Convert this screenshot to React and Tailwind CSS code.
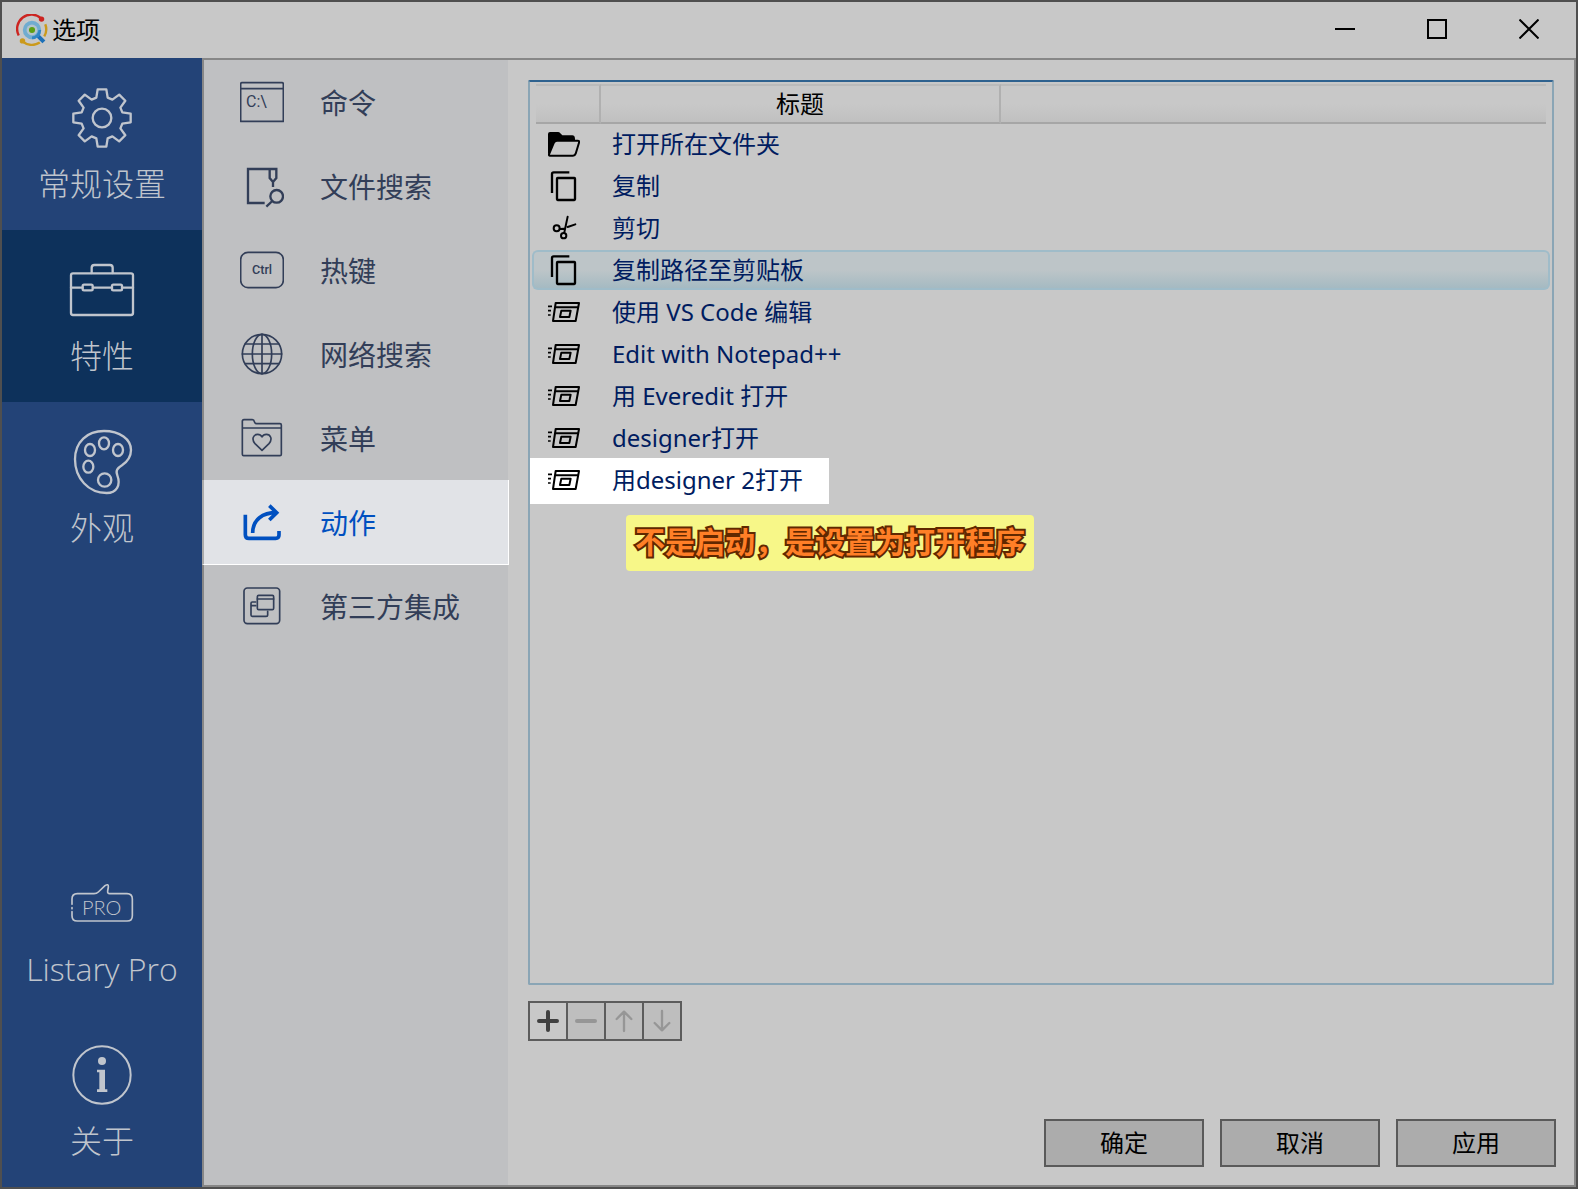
import React from "react";

const line = { fill: "none", stroke: "currentColor", strokeLinecap: "round", strokeLinejoin: "round" };

/* ---------- main sidebar icons ---------- */

function gearPath() {
  const tooth = [[-17, -61], [-13, -86], [13, -86], [17, -61]];
  const pts = [];
  for (let i = 0; i < 8; i++) {
    const a = (i * Math.PI) / 4;
    for (const [x, y] of tooth) {
      pts.push(`${(x * Math.cos(a) - y * Math.sin(a)).toFixed(1)} ${(x * Math.sin(a) + y * Math.cos(a)).toFixed(1)}`);
    }
  }
  return `M${pts.join("L")}Z`;
}

const GearIcon = () => (
  <svg viewBox="-96 -96 192 192" className="size-16" {...line} strokeWidth="7" aria-hidden="true">
    <path d={gearPath()} />
    <circle r="28" />
  </svg>
);

const BriefcaseIcon = () => (
  <svg viewBox="210 114 192 192" className="size-16 overflow-visible" {...line} strokeWidth="7" aria-hidden="true">
    <rect x="213" y="160" width="186" height="125" rx="6" />
    <path d="M275 159V143q0-8 8-8H330q8 0 8 8V159M213 203H247M279 203H335M367 203H399" />
    <rect x="248" y="194" width="30" height="17" rx="4" />
    <rect x="336" y="194" width="30" height="17" rx="4" />
  </svg>
);

const PaletteIcon = () => (
  <svg viewBox="210 630 192 192" className="size-16 overflow-visible" {...line} strokeWidth="7" aria-hidden="true">
    <path d="M312 633C360 633 393 658 393 690C393 712 382 725 366 736C352 745 346 751 352 766C363 795 350 819 320 819C265 819 225 775 225 718C225 665 262 633 312 633Z" />
    <ellipse cx="270" cy="690" rx="15" ry="18" />
    <ellipse cx="312" cy="670" rx="15" ry="18" />
    <ellipse cx="354" cy="690" rx="15" ry="18" />
    <ellipse cx="265" cy="740" rx="15" ry="18" />
    <circle cx="314" cy="780" r="20" />
  </svg>
);

const ProIcon = () => (
  <svg viewBox="210 33 192 192" className="size-16 overflow-visible" {...line} strokeWidth="5" aria-hidden="true">
    <path d="M216 133V117q0-16 16-16H282Q290 101 295 96L315 77Q326 70 325 81L323 93Q322 101 329 101H381q16 0 16 16V167q0 16-16 16H232q-16 0-16-16V155M216 143V146" />
    <text x="305" y="164" textAnchor="middle" fontSize="60" fill="currentColor" stroke="none" className="font-['Lato'] font-light">PRO</text>
  </svg>
);

const InfoIcon = () => (
  <svg viewBox="210 549 192 192" className="size-16" aria-hidden="true">
    <circle cx="306" cy="645" r="86" {...line} strokeWidth="6" />
    <circle cx="306" cy="603" r="12" fill="currentColor" />
    <path d="M291 629H315V688H322V696H291V688H298V637H291Z" fill="currentColor" />
  </svg>
);

/* ---------- feature list icons ---------- */

const CommandIcon = () => (
  <svg viewBox="120 90 132 132" className="size-11" {...line} strokeWidth="5" aria-hidden="true">
    <path d="M122 214V102q0-4 4-4H246q4 0 4 4V214ZM122 116H250" />
    <text x="138" y="171" fontSize="48" fill="currentColor" stroke="none" className="font-['Roboto']">C:\</text>
  </svg>
);

const FileSearchIcon = () => (
  <svg viewBox="120 342 132 132" className="size-11" {...line} strokeLinecap="butt" strokeLinejoin="miter" strokeWidth="7" aria-hidden="true">
    <path d="M194 459H144V357H229V384L219 396L209 384V357M219 394V411" />
    <circle cx="230" cy="439" r="19" />
    <path d="M217 453L199 470" />
  </svg>
);

const CtrlIcon = () => (
  <svg viewBox="120 594 132 132" className="size-11" {...line} strokeWidth="5" aria-hidden="true">
    <rect x="122" y="607" width="128" height="106" rx="22" />
    <text x="186" y="673" textAnchor="middle" fontSize="38" fill="currentColor" stroke="none" className="font-['Roboto'] font-medium">Ctrl</text>
  </svg>
);

const GlobeIcon = () => (
  <svg viewBox="120 96 132 132" className="size-11" {...line} strokeWidth="5" aria-hidden="true">
    <circle cx="186" cy="162" r="59" />
    <ellipse cx="186" cy="162" rx="29" ry="59" />
    <path d="M127 162H245M186 103V221M136 132H236M136 191H236" />
  </svg>
);

const MenuFolderIcon = () => (
  <svg viewBox="120 348 132 132" className="size-11" {...line} strokeWidth="5" aria-hidden="true">
    <path d="M127 364q0-5 5-5H157q5 0 6 6q1 6 7 6H240q4 0 4 4V463q0 4-4 4H131q-4 0-4-4ZM127 384H244" />
    <path d="M186 451L165 431C153 417 161 403 173 403C180 403 184 407 186 411C188 407 192 403 199 403C211 403 219 417 207 431Z" />
  </svg>
);

const ShareIcon = () => (
  <svg viewBox="120 600 132 132" className="size-11" {...line} strokeLinecap="butt" strokeLinejoin="miter" strokeWidth="11" aria-hidden="true">
    <path d="M136 644V704q0 11 11 11H227q10 0 10-10V693" />
    <path d="M158 699C158 658 188 638 230 638M208 617L230 638L208 660" />
  </svg>
);

const IntegrationIcon = () => (
  <svg viewBox="120 852 132 132" className="size-11" {...line} strokeWidth="5" aria-hidden="true">
    <rect x="132" y="864" width="107" height="107" rx="10" />
    <rect x="172" y="886" width="49" height="43" rx="4" />
    <path d="M172 897H221M167 906H157q-4 0-4 4V945q0 4 4 4H198q5 0 5-5V934M153 917H167" />
  </svg>
);

/* ---------- action icons ---------- */

const FolderOpenIcon = () => (
  <svg viewBox="84 174 96 96" className="size-8" aria-hidden="true">
    <path d="M84 253V192q0-6 6-6H114q4 0 7 4l6 6H157q7 0 8 10V212L100 240Z" fill="#000" />
    <path d="M111 212H173q6 0 4 6L167 251q-2 6-8 6H90q-4 0-3-4L101 219q3-7 10-7Z" fill="#c8c8c8" stroke="#000" strokeWidth="6" strokeLinejoin="round" />
  </svg>
);

const CopyIcon = () => (
  <svg viewBox="84 300 96 96" className="size-8" {...line} strokeLinecap="butt" strokeWidth="7" aria-hidden="true">
    <path d="M96 369V312q0-5 5-5H148" />
    <rect x="111" y="324" width="54" height="66" rx="2" />
  </svg>
);

const ScissorsIcon = () => (
  <svg viewBox="84 426 96 96" className="size-8" {...line} strokeWidth="6" aria-hidden="true">
    <circle cx="110" cy="475" r="9" />
    <circle cx="131" cy="497" r="8" />
    <path d="M143 440L133 487M120 477L133 476M143 471L166 463" />
  </svg>
);

const RunIcon = () => (
  <svg viewBox="84 18 96 96" className="size-8" {...line} strokeLinecap="butt" strokeWidth="6" aria-hidden="true">
    <path d="M107 39H177L167 93H99ZM105 52H175" />
    <path d="M124 62H152L148 81H120Z" />
    <path d="M84 49H96M84 62H93M84 75H92" strokeWidth="5" />
  </svg>
);

const LogoIcon = () => (
  <svg viewBox="46 40 94 94" className="size-8" fill="none" aria-hidden="true">
    <path d="M54 103A42 42 0 0 1 120 53" stroke="#cc2420" strokeWidth="7" />
    <circle cx="121" cy="55" r="8" fill="#cc2420" />
    <path d="M132 70A42 42 0 0 1 129 106" stroke="#cb9a1c" strokeWidth="7" />
    <path d="M66 121A42 42 0 0 0 116 124" stroke="#cb9a1c" strokeWidth="7" />
    <circle cx="65" cy="119" r="8" fill="#cb9a1c" />
    <path d="M108 102L128 122" stroke="#1c70b8" strokeWidth="12" />
    <circle cx="93" cy="87" r="20" fill="#b5c4cc" stroke="#71acd0" strokeWidth="14" />
    <path d="M93 110A23 23 0 0 0 116 87" stroke="#2f86c4" strokeWidth="8" />
    <circle cx="93" cy="87" r="16" fill="#b5c4cc" />
    <circle cx="93" cy="87" r="9" fill="#5da013" />
  </svg>
);

/* ---------- data ---------- */

const sections = [
  { label: "常规设置", Icon: GearIcon },
  { label: "特性", Icon: BriefcaseIcon, active: true },
  { label: "外观", Icon: PaletteIcon },
];

const footerSections = [
  { label: "Listary Pro", Icon: ProIcon },
  { label: "关于", Icon: InfoIcon },
];

const features = [
  { label: "命令", Icon: CommandIcon },
  { label: "文件搜索", Icon: FileSearchIcon },
  { label: "热键", Icon: CtrlIcon },
  { label: "网络搜索", Icon: GlobeIcon },
  { label: "菜单", Icon: MenuFolderIcon },
  { label: "动作", Icon: ShareIcon, active: true },
  { label: "第三方集成", Icon: IntegrationIcon },
];

const actions = [
  { title: "打开所在文件夹", Icon: FolderOpenIcon },
  { title: "复制", Icon: CopyIcon },
  { title: "剪切", Icon: ScissorsIcon },
  { title: "复制路径至剪贴板", Icon: CopyIcon, selected: true },
  { title: "使用 VS Code 编辑", Icon: RunIcon },
  { title: "Edit with Notepad++", Icon: RunIcon },
  { title: "用 Everedit 打开", Icon: RunIcon },
  { title: "designer打开", Icon: RunIcon },
  { title: "用designer 2打开", Icon: RunIcon, spotlight: true },
];

const tools = [
  { label: "添加", d: "M9 36H63M36 9V63", width: 12 },
  { label: "删除", d: "M9 36H63", width: 12, disabled: true },
  { label: "上移", d: "M36 66V8M14 30L36 8L58 30", width: 7, disabled: true },
  { label: "下移", d: "M36 6V64M14 42L36 64L58 42", width: 7, disabled: true },
];

/* ---------- parts ---------- */

function SectionButton({ label, Icon, active }) {
  return (
    <button
      type="button"
      aria-current={active ? "page" : undefined}
      className={
        "flex h-[172px] w-full flex-col items-center gap-2.5 pt-7 text-[#c0c5cd] " + (active ? "bg-[#0d315b]" : "")
      }
    >
      <Icon />
      <span className="text-[32px] leading-[48px] font-light whitespace-nowrap">{label}</span>
    </button>
  );
}

function FeatureButton({ label, Icon, active }) {
  return (
    <button
      type="button"
      aria-current={active ? "page" : undefined}
      className={
        "flex items-center gap-9 pl-9 text-[28px] leading-10 " +
        (active
          ? "-mr-px -mb-px -ml-0.5 h-[85px] border-r border-b border-l-2 border-r-white border-b-white border-l-[#aaaaaa] bg-[#e1e3e7] text-[#0050c0]"
          : "h-[84px] text-[#323e58]")
      }
    >
      <Icon />
      <span className="pt-0.5">{label}</span>
    </button>
  );
}

function ActionRow({ title, Icon, selected, spotlight }) {
  const fill = selected ? "border-[#9fbcc9] bg-linear-to-b from-[#bdc5c8] from-50% to-[#a5bac2] to-100% " : "border-transparent ";
  return (
    <tr aria-selected={!!selected}>
      <td className="relative p-0 pb-0.5">
        {spotlight && <span className="absolute -top-0.5 -left-0.5 h-[46px] w-[299px] bg-white" />}
        <div className={"relative flex h-10 items-center rounded-l-md border-y-2 border-l-2 pl-3.5 text-black " + fill}>
          <Icon />
        </div>
      </td>
      <td className="relative p-0 pb-0.5">
        <div className={"flex h-10 items-center border-y-2 pl-[11px] text-[#001c60] " + fill}>{title}</div>
      </td>
      <td className="p-0 pb-0.5">
        <div className={"h-10 rounded-r-md border-y-2 border-r-2 " + fill} />
      </td>
    </tr>
  );
}

const headCell = "flex h-10 items-center justify-center border-t-2 border-b-2 border-t-[#bbbbbb] border-b-[#a6a6a6] bg-linear-to-b from-[#c8c8c8] from-50% to-[#c0c0c0] ";

function ActionTable() {
  return (
    <table className="w-full table-fixed border-separate border-spacing-0 font-['Noto_Sans','Noto_Sans_CJK_SC',sans-serif] text-[24px] leading-8">
      <colgroup>
        <col className="w-[69px]" />
        <col className="w-[400px]" />
        <col />
      </colgroup>
      <thead>
        <tr>
          <th className="p-0 font-normal" aria-label="图标">
            <div className={headCell + "ml-1 border-r-2 border-r-[#b0b0b0]"} />
          </th>
          <th className="p-0 font-normal">
            <div className={headCell + "border-r-2 border-r-[#b0b0b0] text-black"}>标题</div>
          </th>
          <th className="p-0 font-normal" aria-label="其他">
            <div className={headCell + "mr-1"} />
          </th>
        </tr>
      </thead>
      <tbody>
        {actions.map((a) => (
          <ActionRow key={a.title} {...a} />
        ))}
      </tbody>
    </table>
  );
}

function TitleBar() {
  const control = "flex h-14 w-[92px] items-center justify-center pr-0.5 pb-0.5";
  return (
    <header className="flex h-14 items-center pl-3.5">
      <LogoIcon />
      <h1 className="ml-1 flex-1 text-[24px] leading-8 text-black">选项</h1>
      <button type="button" aria-label="最小化" className={control}>
        <span className="h-0.5 w-5 bg-black" />
      </button>
      <button type="button" aria-label="最大化" className={control}>
        <span className="size-5 border-2 border-black" />
      </button>
      <button type="button" aria-label="关闭" className={control}>
        <svg viewBox="0 0 20 20" className="size-5" stroke="#000" strokeWidth="2" aria-hidden="true">
          <path d="M0.5 0.5L19.5 19.5M19.5 0.5L0.5 19.5" />
        </svg>
      </button>
    </header>
  );
}

export default function App() {
  return (
    <div className="flex min-h-screen flex-col border-2 border-[#4f4f4f] bg-[#c8c8c8] font-['Open_Sans','Noto_Sans_CJK_SC',sans-serif]">
      <TitleBar />
      <div className="flex flex-1">
        <nav aria-label="设置分类" className="flex w-[200px] shrink-0 flex-col bg-[#234377]">
          {sections.map((s) => (
            <SectionButton key={s.label} {...s} />
          ))}
          <div className="mt-auto">
            {footerSections.map((s) => (
              <SectionButton key={s.label} {...s} />
            ))}
          </div>
        </nav>

        <div className="flex min-w-0 flex-1 border-2 border-[#878787]">
          <nav aria-label="特性" className="flex w-[304px] shrink-0 flex-col bg-[#bfc0c2]">
            {features.map((f) => (
              <FeatureButton key={f.label} {...f} />
            ))}
          </nav>

          <main className="flex min-w-0 flex-1 flex-col pt-5 pr-[18px] pb-[18px] pl-5">
            <section className="relative mr-0.5 flex-1 rounded-xs border-2 border-[#8aa5b5] border-t-[#2f628f] px-0.5 pt-0.5">
              <ActionTable />
              <p className="absolute top-[433px] left-24 rounded-sm bg-[#f7f788] px-[9px] pt-1 pb-2.5 font-['Noto_Sans_CJK_SC'] text-[30px] leading-[42px] font-bold whitespace-nowrap text-[#ff7f27] [-webkit-text-stroke:4px_#602800] [paint-order:stroke_fill]">
                不是启动，是设置为打开程序
              </p>
            </section>

            <div role="toolbar" aria-label="编辑动作" className="mt-4 flex">
              {tools.map((t) => (
                <button
                  key={t.label}
                  type="button"
                  aria-label={t.label}
                  disabled={t.disabled}
                  className="-mr-0.5 flex size-10 items-center justify-center border-2 border-[#5c5c5c] text-[#404040] disabled:bg-[#bebebe] disabled:text-[#969696]"
                >
                  <svg viewBox="0 0 72 72" className="size-6" {...line} strokeWidth={t.width} aria-hidden="true">
                    <path d={t.d} />
                  </svg>
                </button>
              ))}
            </div>

            <div className="mt-[78px] flex justify-end gap-4">
              {["确定", "取消", "应用"].map((label) => (
                <button
                  key={label}
                  type="button"
                  className="h-12 w-40 border-2 border-[#5a5a5a] bg-[#acacac] text-[24px] leading-8 text-black"
                >
                  {label}
                </button>
              ))}
            </div>
          </main>
        </div>
      </div>
    </div>
  );
}
